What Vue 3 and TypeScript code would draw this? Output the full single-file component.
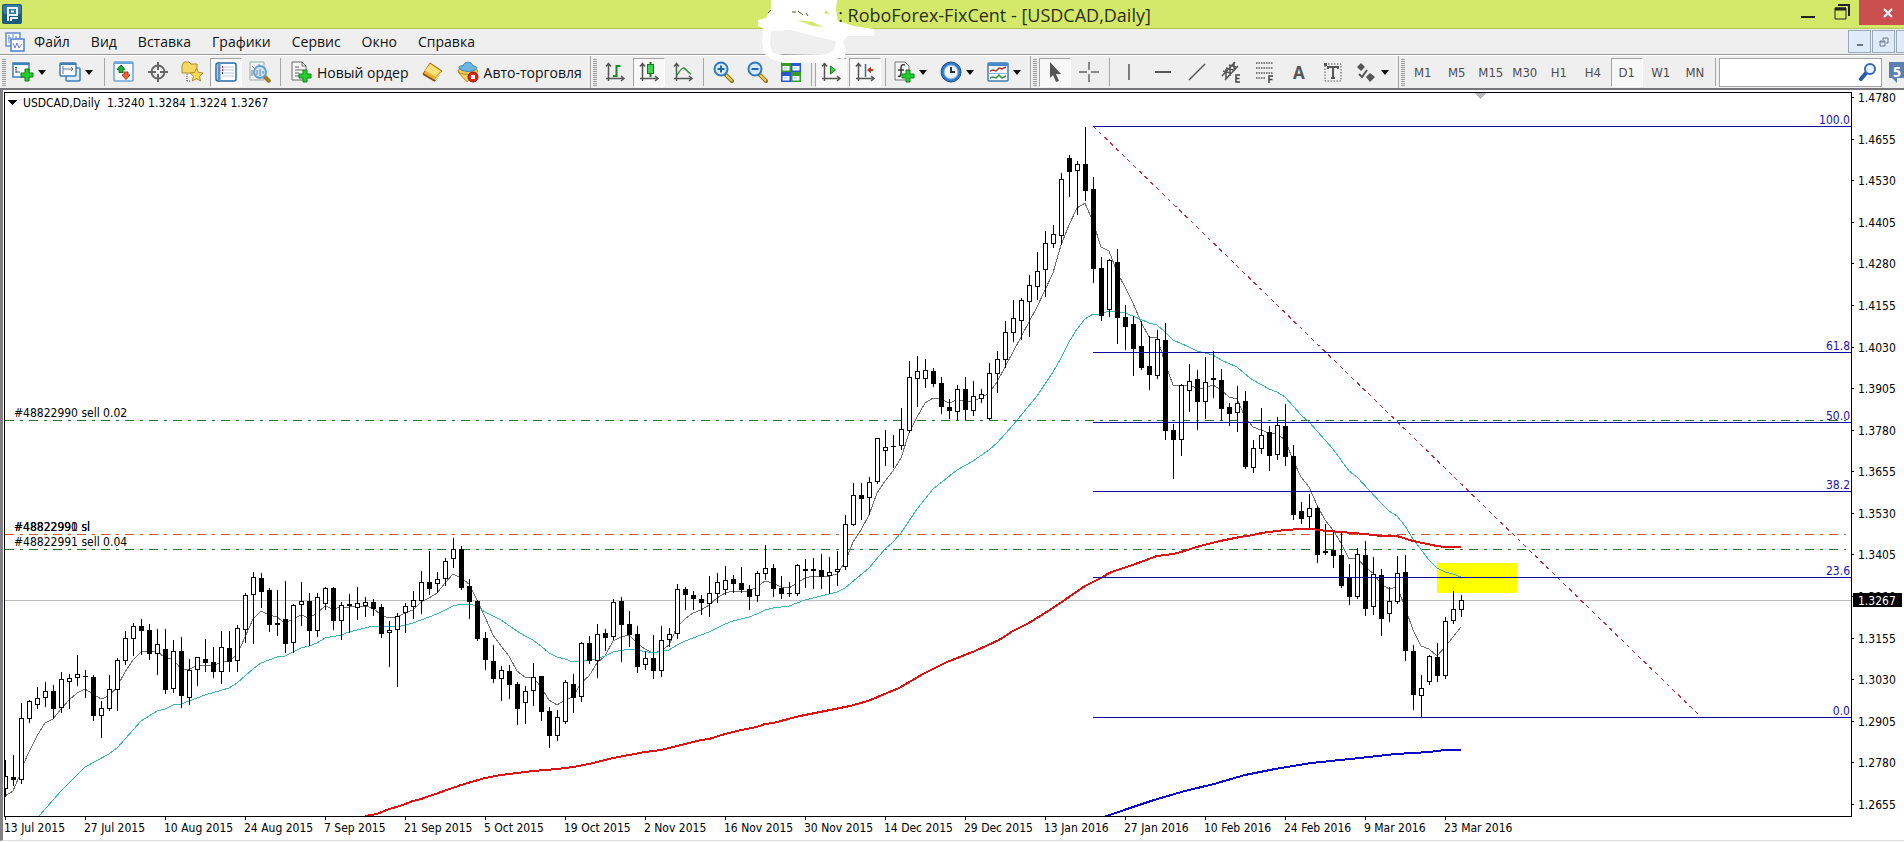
<script setup lang="ts">
interface Candle {
  x: number
  high: number
  top: number
  bottom: number
  low: number
  down: boolean
}

interface Tool {
  kind: 'button' | 'menu' | 'sep' | 'edge'
  icon?: string
  label?: string
  text?: string
  on?: boolean
}

const STEP = 8
const FIRST_X = 5

// high, body top, body bottom, low; a trailing "b" marks a falling candle
const rows = `760 776 789 796|755 777 780 785b|703 718 780 783|700 701 719 722|687 698 705 708|682 691 698 706|685 691 709 718b|672 679 708 712|674 678 682 708|655 674 678 685
670 676 677 697b|675 677 716 720b|701 708 716 737|675 689 709 710|658 660 690 710|631 638 661 664|623 626 639 655|619 626 631 654b|624 630 654 659b|629 644 654 674
629 649 690 693b|640 651 689 692|637 651 696 707b|659 670 698 704|657 657 670 685|639 659 663 671b|647 662 672 677b|631 647 672 683|631 648 662 671b|625 628 661 671
593 595 630 642|572 577 595 643|573 578 592 607b|588 590 625 631b|590 623 625 635b|581 619 644 652b|604 605 643 652|582 601 605 625|593 601 631 645b|593 597 631 636
587 588 604 609|587 588 621 629b|602 605 621 639|594 604 606 632b|587 603 608 619|597 602 606 616|599 602 609 615b|604 607 634 637b|621 630 633 666|613 616 630 686
603 606 613 632|591 600 607 618|571 582 601 613|551 582 589 594b|572 579 584 592|558 561 579 585|538 549 559 567|546 549 588 589b|579 586 602 618b|600 601 639 640b
632 638 660 669b|645 661 679 682b|666 670 679 700|665 671 685 698b|682 684 709 724b|686 691 703 723|663 677 691 705|676 676 712 720b|707 711 736 747b|710 717 736 740
680 682 722 723|674 684 698 712b|642 643 697 701|636 643 661 663b|624 634 661 677|629 633 638 650b|599 602 637 639|597 601 625 661b|611 624 635 646b|626 634 667 672b
651 658 665 669|635 658 671 678b|626 640 671 676|628 634 640 646|584 589 634 638|587 589 595 609b|591 595 599 609b|595 599 603 614b|576 593 604 616|573 582 594 602
566 580 590 594|575 579 584 592b|567 583 590 592b|585 589 597 609b|571 573 596 601|545 568 574 579|564 568 589 596b|576 588 594 598b|582 593 594 596b|564 565 594 595
559 569 571 587b|558 569 571 588b|554 570 577 588b|557 572 576 593|551 569 572 585|515 524 567 569|483 495 525 525|483 495 499 519b|477 482 498 514|438 438 482 483
430 447 451 465|435 446 447 467b|408 429 446 449|361 377 431 432|356 371 379 406|359 370 379 387|368 371 384 386b|377 383 407 413b|399 407 411 418b|385 389 412 419
377 389 410 419b|381 396 411 415|389 394 399 402|363 373 419 419|351 359 374 392|321 332 360 367|300 318 333 341|298 300 321 339|275 285 302 336|252 271 287 299
231 243 270 296|225 234 244 247|173 179 236 244|155 158 172 196b|161 164 171 214|127 164 191 200b|177 189 269 282b|257 268 316 320b|259 260 310 316|249 262 318 343b
305 317 327 349b|316 324 349 375b|321 346 368 369b|336 366 375 389b|330 339 376 378|323 340 431 439b|424 430 440 478b|384 385 440 455|364 381 391 411|370 379 402 429b
357 382 402 418|351 378 380 397b|369 380 409 420b|403 407 414 425b|386 403 413 431|391 401 467 468b|440 448 468 472|408 435 449 453|426 432 456 470b|417 425 455 459
404 426 457 465b|445 456 515 519b|502 511 519 523b|494 508 517 529|506 508 555 562b|524 551 553 554b|530 550 556 567b|532 555 586 587b|564 578 597 604b|548 554 597 598
541 555 609 615b|557 574 607 614|569 575 619 635b|587 601 614 621|556 573 602 603|555 572 651 660b|645 651 695 709b|675 688 696 716|655 656 682 684|643 657 676 681b
617 621 676 678|591 609 621 623|595 600 610 616`

const candles: Candle[] = rows
  .split(/[|\n]/)
  .map((row, i) => {
    const [high, top, bottom, low] = row.replace('b', '').split(' ').map(Number)
    return { x: FIRST_X + i * STEP, high, top, bottom, low, down: row.endsWith('b') }
  })

const fastMa =
  '5,796 13,791 21,772 24,763 29,752 37,736 45,723 53,719 61,709 69,700 77,693 85,689 93,694 101,699 109,696 117,687 125,672 133,660 141,652 157,651 165,658 173,659 181,669 189,669 197,666 205,665 213,666 221,662 229,661 237,655 245,637 253,619 261,611 269,615 277,617 285,623 293,619 301,615 309,618 317,613 325,606 333,609 341,607 349,607 365,606 373,608 381,615 389,618 397,617 405,613 413,610 421,602 429,598 437,593 445,583 453,574 461,578 469,584 477,600 485,617 493,635 501,646 509,656 517,671 525,677 533,677 541,687 549,700 557,705 565,700 573,697 581,683 589,676 597,663 605,656 613,641 621,637 629,635 637,643 645,649 653,653 661,651 669,645 677,627 685,619 693,613 701,610 709,605 717,598 725,593 733,591 749,591 757,587 765,581 773,583 781,587 789,588 797,583 805,578 813,576 829,576 837,574 845,562 853,542 861,530 869,515 877,493 885,481 893,471 901,458 909,433 917,417 925,403 933,398 941,399 949,403 957,400 965,401 973,401 981,398 989,393 997,382 1005,367 1013,352 1021,337 1029,322 1037,307 1045,290 1053,273 1061,245 1069,225 1077,208 1085,203 1093,222 1101,247 1109,251 1117,272 1125,287 1133,303 1141,322 1149,337 1157,337 1165,363 1173,385 1189,385 1197,388 1205,388 1213,385 1221,390 1229,397 1237,399 1245,417 1253,427 1261,430 1269,433 1277,434 1285,440 1293,460 1301,477 1309,487 1317,505 1325,520 1333,530 1341,543 1349,559 1357,558 1365,567 1373,573 1381,584 1389,589 1397,587 1405,607 1413,630 1421,646 1429,649 1437,656 1445,647 1453,637 1461,627'

const midMa =
  '39,816 61,791 85,767 109,754 117,748 125,739 133,730 141,721 157,711 165,709 173,705 181,704 189,701 205,695 229,688 237,683 253,669 261,663 277,657 285,656 301,648 309,646 317,643 325,638 341,635 349,632 373,626 397,627 405,625 413,623 437,614 453,606 461,604 469,604 477,606 485,612 501,620 517,631 525,636 533,640 541,646 549,653 557,657 565,659 573,662 581,661 597,659 605,656 613,652 629,649 637,650 653,653 669,650 677,645 685,641 709,632 725,624 733,621 749,617 757,614 765,610 773,608 789,606 805,600 813,598 837,592 845,588 869,568 885,549 893,542 901,533 917,509 933,489 957,470 973,461 989,450 997,443 1013,425 1037,396 1045,384 1053,372 1061,358 1069,342 1077,329 1085,319 1093,314 1101,314 1109,311 1117,312 1125,313 1133,316 1149,323 1157,325 1165,332 1173,340 1189,347 1197,351 1213,355 1221,360 1237,367 1245,374 1253,380 1269,389 1277,392 1285,397 1301,415 1309,422 1333,449 1349,471 1357,477 1381,503 1389,511 1397,516 1405,526 1413,539 1429,560 1437,568 1445,572 1453,574 1461,577'

const slowMa =
  '365,816 377,814 389,809 400,806 413,801 421,799 461,785 485,778 501,775 533,771 557,769 573,767 589,764 613,758 645,752 661,750 701,740 709,739 725,734 741,730 757,727 765,724 773,723 800,716 825,711 850,706 868,701 899,688 923,674 947,662 975,651 999,640 1013,631 1029,623 1053,608 1085,586 1103,577 1109,573 1141,562 1157,556 1173,554 1181,552 1200,546 1220,541 1240,537 1253,535 1261,533 1285,530 1301,529 1313,529 1317,530 1341,532 1365,534 1381,536 1397,536 1413,541 1437,546 1445,547 1461,547'

const longMa = '1104,817 1130,808 1154,800 1185,791 1214,784 1245,775 1275,769 1311,763 1360,758 1396,754 1413,753 1429,752 1445,750 1461,750'

const fibs = [
  { y: 126, text: '100.0' },
  { y: 352, text: '61.8' },
  { y: 422, text: '50.0' },
  { y: 491, text: '38.2' },
  { y: 577, text: '23.6' },
  { y: 717, text: '0.0' }
]

const orders = [
  { y: 420, cls: 'sell', texts: ['#48822990 sell 0.02'] },
  { y: 534, cls: 'stop', texts: ['#48822990 sl', '#48822991 sl'] },
  { y: 549, cls: 'sell', texts: ['#48822991 sell 0.04'] }
]

const prices = Array.from({ length: 18 }, (_, i) => ({
  y: Math.round(97 + (i * 707) / 17),
  text: (1.478 - i * 0.0125).toFixed(4)
}))

const dates = [
  '13 Jul 2015', '27 Jul 2015', '10 Aug 2015', '24 Aug 2015', '7 Sep 2015', '21 Sep 2015', '5 Oct 2015',
  '19 Oct 2015', '2 Nov 2015', '16 Nov 2015', '30 Nov 2015', '14 Dec 2015', '29 Dec 2015', '13 Jan 2016',
  '27 Jan 2016', '10 Feb 2016', '24 Feb 2016', '9 Mar 2016', '23 Mar 2016'
].map((text, i) => ({ text, x: i * 80 }))

const menus = ['Файл', 'Вид', 'Вставка', 'Графики', 'Сервис', 'Окно', 'Справка']
const frames = ['M1', 'M5', 'M15', 'M30', 'H1', 'H4', 'D1', 'W1', 'MN']

const plus = (x: number, y: number) =>
  `<path d="M${x + 4} ${y}h4v4h4v4h-4v4h-4v-4h-4v-4h4z" fill="#22cf2c" stroke="#0a8412"/>`
const axes = '<path d="M4.500 20V3M2 5.500l2.500-3 2.500 3M2 17.500h17M17 15l3 2.500-3 2.500" fill="none" stroke="#555" stroke-width="1.500"/>'
const lens = (mark: string) =>
  `<path d="M13 13l7 7" stroke="#8f6d1a" stroke-width="4" stroke-linecap="round"/><path d="M14 14l6 6" stroke="#efcf4f" stroke-width="2"/><circle cx="9" cy="8" r="6.500" fill="#d5ecfb" stroke="#2f78c0" stroke-width="2"/><path d="${mark}" stroke="#2467ad" stroke-width="2"/>`

const icons: Record<string, string> = {
  newChart: `<rect x="1" y="2" width="16" height="14" fill="#fff" stroke="#3f7fb5" stroke-width="1.500"/><path d="M1 3h16" stroke="#3f7fb5" stroke-width="2"/><path d="M4 6v6M3 7l1-1 1 1M4 11h4" stroke="#456" fill="none"/>${plus(9, 8)}`,
  profiles: '<rect x="7" y="7" width="14" height="13" rx="1" fill="#dcebf8" stroke="#3f7fb5" stroke-width="1.500"/><rect x="1" y="2" width="16" height="13" rx="1" fill="#fff" stroke="#3f7fb5" stroke-width="1.500"/><path d="M1 3h16" stroke="#3f7fb5" stroke-width="2"/><path d="M4 5v8M4 8h10M12 6l2 2-2 2" fill="none" stroke="#678"/>',
  market: '<rect x="1" y="1" width="19" height="19" rx="1" fill="#f8fcff" stroke="#69a5d8" stroke-width="1.500"/><path d="M1 2h19" stroke="#69a5d8" stroke-width="2"/><path d="M8 4l4 4.500h-2v3h-4v-3h-2z" fill="#2ca638" stroke="#137521"/><path d="M13 18.500l4-4.500h-2v-3h-4v3h-2z" fill="#f0633a" stroke="#b53716"/>',
  target: '<circle cx="11" cy="11" r="6.500" fill="none" stroke="#666" stroke-width="2"/><path d="M11 1v8M11 13v8M1 11h8M13 11h8" stroke="#666" stroke-width="2"/>',
  navigator: '<path d="M1 4l2-3h5l2 2h6v9H1z" fill="#f5d968" stroke="#b08c24"/><path d="M6 13v7M6 20h4" stroke="#444" stroke-dasharray="1 1"/><path d="M15.500 7l2 4.500 4.500.500-3.500 3.200 1 4.800-4-2.500-4.200 2.500 1.200-4.800-3.500-3.200 4.500-.500z" fill="#fadb57" stroke="#b08c24"/>',
  terminal: '<rect x="1" y="2" width="20" height="18" rx="2" fill="#fff" stroke="#2469ab" stroke-width="1.500"/><path d="M4 3v16" stroke="#5b93c8" stroke-width="3"/><path d="M8 6h11M8 9h11M8 12h11M8 15h11" stroke="#b7cbe3"/><path d="M7 6h1M7 9h1" stroke="#c33" stroke-width="2"/><path d="M7 12h1" stroke="#333" stroke-width="2"/>',
  tester: '<path d="M1 1h14v18H1z" fill="#f2f2f2" stroke="#9aa"/><path d="M3 5l4 4M3 15v-6M10 3v5" stroke="#777"/><path d="M15 15l6 6" stroke="#a07a20" stroke-width="4"/><circle cx="11" cy="11" r="6" fill="#cfe6f7" stroke="#659fcb" stroke-width="2"/><path d="M8 14v-5M11 15V8M14 13v-3" stroke="#5b84b0"/>',
  order: `<path d="M2 1h10l4 4v14H2z" fill="#f6f6f6" stroke="#666"/><path d="M12 1v4h4M5 6h4M5 9h8M5 12h4M5 15h4" fill="none" stroke="#666"/>${plus(9, 9)}`,
  book: '<path d="M8 2l12 8-7 10L1 13z" fill="#e9b22c" stroke="#946410"/><path d="M8 3l10.500 7-5 5.500L3 9.500z" fill="#ffdf77"/><path d="M2 13.500l11 6 7-9" fill="none" stroke="#fff3c4"/><path d="M1 13l12 7" stroke="#7b510b" stroke-width="2"/>',
  robot: '<path d="M1 11l9 10 9-10z" fill="#f8d257" stroke="#b88c22"/><ellipse cx="11" cy="10" rx="10" ry="3.500" fill="#ecc853" stroke="#b08a25"/><path d="M3 8c-3-2 1-4 3-3 1-5 9-5 10 0 4 0 5 2 2 4-5 2-11 2-15-1z" fill="#6eb6e2" stroke="#3985ba"/><circle cx="16" cy="16" r="5" fill="#d7261b" stroke="#a3120b"/><rect x="14" y="14" width="4" height="4" fill="#fff"/>',
  bars: `${axes}<path d="M12.500 4v12M12.500 5h4M9 15h3.500" stroke="#178c25" stroke-width="2" fill="none"/>`,
  candles: `${axes}<path d="M12.500 1v15" stroke="#0d7e1b" stroke-width="2"/><rect x="9.500" y="3.500" width="6" height="9" fill="#3dd64b" stroke="#0d7e1b"/>`,
  line: `${axes}<path d="M5 14c3-4 5-8 7-7s3 4 7 6" stroke="#3a8a41" stroke-width="1.500" fill="none"/>`,
  zoomIn: lens('M5.500 8h7M9 4.500v7'),
  zoomOut: lens('M5.500 8h7'),
  tile: '<path d="M1 1h10v10H1z" fill="#3a9a26"/><path d="M11 1h10v10H11z" fill="#2a57cf"/><path d="M1 11h10v10H1z" fill="#2a57cf"/><path d="M11 11h10v10H11z" fill="#3a9a26"/><path d="M2.500 5h7v4.500h-7zM12.500 5h7v4.500h-7zM2.500 15h7v4.500h-7zM12.500 15h7v4.500h-7z" fill="#f3f8ff"/><path d="M4 7h3M14 7h3M4 17h3M14 17h3" stroke="#9cbfe2"/>',
  scroll: `${axes}<path d="M10.500 5v8l5-4z" fill="#45c952" stroke="#14801f"/>`,
  shift: `${axes}<path d="M11.500 3v13" stroke="#2c6ea8" stroke-width="1.500"/><path d="M19 9h-3" stroke="#b5401f" stroke-width="2"/><path d="M17 5.500l-4 3.500 4 3.500z" fill="#b5401f"/>`,
  indicator: `<path d="M2 1h10l4 4v14H2z" fill="#f6f6f6" stroke="#777"/><path d="M12 4c-3-1-4 0-4 3v5c0 3-1 4-3 3M5 9h6" fill="none" stroke="#333" stroke-width="1.500"/>${plus(9, 9)}`,
  clock: '<circle cx="11" cy="11" r="10" fill="#2f79c9" stroke="#1a4f92"/><circle cx="11" cy="11" r="7" fill="#eff7ff" stroke="#7fb2e4"/><path d="M11 6v5h4" fill="none" stroke="#333" stroke-width="2"/>',
  template: '<rect x="1" y="2" width="20" height="18" rx="1" fill="#fff" stroke="#3f7fb5" stroke-width="1.500"/><path d="M1 3.500h20" stroke="#4689c4" stroke-width="3"/><path d="M3 10l3-1 3 1 3-3 3 1 4-2" fill="none" stroke="#a13527" stroke-width="1.500"/><path d="M2 12.500h18" stroke="#8db6d9"/><path d="M3 17l3-1 3 1 3-3 3 3 4-2" fill="none" stroke="#2f8f3b" stroke-width="1.500"/>',
  cursor: '<path d="M6 1l11 12h-5l3 7-3 1-3-7-3 3z" fill="#555"/>',
  cross: '<path d="M11 1v8M11 13v8M1 11h8M13 11h8" stroke="#666" stroke-width="1.500"/>',
  vline: '<path d="M11 3v16" stroke="#555" stroke-width="1.500"/>',
  hline: '<path d="M3 11h16" stroke="#555" stroke-width="2"/>',
  trend: '<path d="M3 19L19 3" stroke="#555" stroke-width="1.500"/>',
  channel: '<path d="M2 15L15 1M5 19L18 5M3 10l7 2M6 7l7 2M9 4l7 2M6 18V8M10 15V4M14 10V1" stroke="#555" stroke-width="1.500"/><path d="M20 14h-4v7h4M16 17.500h3.500" fill="none" stroke="#444" stroke-width="1.500"/>',
  fibo: '<path d="M2 2h17M2 7h17M2 12h17M2 17h10" stroke="#555" stroke-width="1.500" stroke-dasharray="1.500 1"/><path d="M19 15h-4v7M15 18.500h3.500" fill="none" stroke="#444" stroke-width="1.500"/>',
  label: '<rect x="3" y="3" width="16" height="17" fill="none" stroke="#555" stroke-dasharray="1.500 1.500"/><path d="M6 8V6h10v2M11 6v11M9 17h4" fill="none" stroke="#555" stroke-width="2"/><path d="M2 2h3v3H2z" fill="#555"/>',
  arrows: '<path d="M6 2l4 4-4 4-4-4zM15 12l5 4-5 5-4-5z" fill="#555"/><path d="M4 13l3 3 5-7" fill="none" stroke="#555" stroke-width="2"/>'
}

const b = (icon: string, label: string, on = false): Tool => ({ kind: 'button', icon, label, on })
const m = (icon: string, label: string): Tool => ({ kind: 'menu', icon, label })
const sep: Tool = { kind: 'sep' }
const edge: Tool = { kind: 'edge' }

const tools: Tool[] = [
  m('newChart', 'Новый график'), m('profiles', 'Профили'), sep,
  b('market', 'Обзор рынка'), b('target', 'Окно данных'), b('navigator', 'Навигатор'),
  b('terminal', 'Терминал', true), b('tester', 'Тестер стратегий'), sep,
  { kind: 'button', icon: 'order', text: 'Новый ордер' }, b('book', 'MetaEditor'),
  { kind: 'button', icon: 'robot', text: 'Авто-торговля' }, edge,
  b('bars', 'Бары'), b('candles', 'Японские свечи', true), b('line', 'Линия'), sep,
  b('zoomIn', 'Приблизить'), b('zoomOut', 'Отдалить'), b('tile', 'Окна мозаикой'), sep,
  b('scroll', 'Автопрокрутка', true), b('shift', 'Сдвиг графика', true), sep,
  m('indicator', 'Индикаторы'), m('clock', 'Периоды'), m('template', 'Шаблоны'), edge,
  b('cursor', 'Курсор', true), b('cross', 'Перекрестие'), sep,
  b('vline', 'Вертикальная линия'), b('hline', 'Горизонтальная линия'), b('trend', 'Трендовая линия'),
  b('channel', 'Канал'), b('fibo', 'Линии Фибоначчи'), { kind: 'button', text: 'A', label: 'Текст' },
  b('label', 'Метка'), m('arrows', 'Стрелки'), edge
]
</script>

<template>
  <div class="app">
    <header class="titlebar">
      <svg class="logo" viewBox="0 0 20 20" aria-hidden="true">
        <rect x="0" y="0" width="20" height="20" rx="2" fill="#1c5a80" />
        <rect x="1" y="1" width="18" height="9" rx="2" fill="#38799f" />
        <path d="M6 17V4h9v7H6M9 17v-3h7M9 7.500h3" fill="none" stroke="#e8f4fa" stroke-width="2" />
      </svg>
      <h1 class="title">
        <svg class="scribble" viewBox="757 0 118 64" aria-hidden="true">
          <path fill="#fff" fill-rule="evenodd" d="M770 0H836L835 10L837 21L853 26L873 29V36H846L842 42L845 50L843 59L838 58L822 63H782L770 59L763 53L761 40L762 28L757 26V20L765 18L770 8ZM770 31L769 45L772 53L782 55L826 54L833 50L835 41L816 37L790 30Z" />
          <path fill="#d4e869" d="M796 20L812 22L822 27L812 26ZM825 10L829 15L823 13Z" />
          <path d="M791 12l4 0M797 11l5 4M805 13l2 3M767 13l3-3" stroke="#555b30" fill="none" />
        </svg>
        <span class="caption">: RoboForex-FixCent - [USDCAD,Daily]</span>
      </h1>
      <div class="controls">
        <button class="ctl" aria-label="Свернуть"><svg width="16" height="20"><path d="M1 17h14" stroke="#222" stroke-width="2" /></svg></button>
        <button class="ctl" aria-label="Восстановить">
          <svg width="16" height="20"><path d="M4 5h11v11" fill="none" stroke="#222" stroke-width="2" /><path d="M1 8h11v11H1z" fill="none" stroke="#222" /><path d="M1 9h11" stroke="#222" stroke-width="3" /></svg>
        </button>
        <button class="close" aria-label="Закрыть"><svg width="12" height="12"><path d="M2 2l8 8M10 2l-8 8" stroke="#fff" stroke-width="2" /></svg></button>
      </div>
    </header>

    <nav class="menubar">
      <svg class="doc" viewBox="0 0 20 20" aria-hidden="true">
        <rect x="1" y="1" width="14" height="13" fill="#fff" stroke="#5d8ed0" stroke-width="1.500" />
        <path d="M4 3v8M8 2v4M11 4v4M3 6h3" stroke="#5d8ed0" />
        <rect x="6" y="7" width="13" height="12" fill="#fff" stroke="#4b7fc9" stroke-width="1.500" />
        <path d="M8 11l2 5 2-5 2 5 3-4" fill="none" stroke="#6a7bd0" />
      </svg>
      <button v-for="name in menus" :key="name" class="menu">{{ name }}</button>
      <div class="mdi">
        <button class="mdi-btn" aria-label="Свернуть окно"><svg width="12" height="12"><path d="M3 9h6" stroke="#68788c" stroke-width="2" /></svg></button>
        <button class="mdi-btn" aria-label="Восстановить окно"><svg width="12" height="12"><path d="M5 4V2h5v5H8M2 5h5v5H2zM2 6h5" fill="none" stroke="#68788c" /></svg></button>
        <button class="mdi-btn" aria-label="Закрыть окно"><svg width="12" height="12"><path d="M3 3l6 6M9 3l-6 6" stroke="#68788c" stroke-width="2" /></svg></button>
      </div>
    </nav>

    <div class="toolbar">
      <span class="grip"></span>
      <template v-for="(t, i) in tools" :key="i">
        <span v-if="t.kind === 'sep'" class="sep"></span>
        <span v-else-if="t.kind === 'edge'" class="edge"><span class="grip"></span></span>
        <button v-else class="tool" :class="{ on: t.on, caret: t.kind === 'menu', wide: t.icon && t.text, letter: !t.icon }" :aria-label="t.label">
          <svg v-if="t.icon" class="icon" viewBox="0 0 22 22" aria-hidden="true" v-html="icons[t.icon]"></svg>
          <span v-if="t.text">{{ t.text }}</span>
          <span v-if="t.kind === 'menu'" class="arrow"></span>
        </button>
      </template>
      <button v-for="f in frames" :key="f" class="tool frame" :class="{ on: f === 'D1' }">{{ f }}</button>
      <span class="sep"></span>
      <label class="search">
        <input type="text" aria-label="Поиск" />
        <svg width="18" height="20" viewBox="0 0 18 20" aria-hidden="true">
          <path d="M7 11l-5 6" stroke="#2c59a8" stroke-width="4" stroke-linecap="round" />
          <circle cx="11" cy="7" r="5" fill="#eaf3ff" stroke="#3767b5" stroke-width="2" />
        </svg>
      </label>
      <button class="chat" aria-label="Сообщения">
        <svg width="28" height="24" viewBox="0 0 28 24"><path d="M2 2h24v16H10v5l-5-5H2z" fill="#5d7fb0" /></svg>
        <span class="count">5</span>
      </button>
    </div>

    <main class="chart">
      <section class="plot">
        <svg class="canvas" role="img" aria-label="USDCAD, Daily">
          <g transform="translate(-5 -93)">
            <rect class="zone" x="1437" y="563" width="80" height="30" />
            <rect class="bid" x="5" y="600" width="100%" height="1" />
            <line v-for="o in orders" :key="o.y" :class="o.cls" x1="5" x2="100%" :y1="o.y + 0.5" :y2="o.y + 0.5" />
            <polyline class="ma fast" :points="fastMa" />
            <polyline class="ma mid" :points="midMa" />
            <g v-for="c in candles" :key="c.x">
              <rect :x="c.x" :y="c.high" width="1" :height="c.low - c.high + 1" />
              <rect :x="c.x - 2" :y="c.top" width="5" :height="c.bottom - c.top" />
              <rect v-if="!c.down" class="hollow" :x="c.x - 1" :y="c.top + 1" width="3" :height="Math.max(1, c.bottom - c.top - 2)" />
            </g>
            <polyline class="ma slow" :points="slowMa" />
            <polyline class="ma long" :points="longMa" />
            <line class="ray" x1="1093" y1="126" x2="1701" y2="717" />
            <rect v-for="f in fibs" :key="f.text" class="fib" x="1093" :y="f.y" width="100%" height="1" />
            <path class="shift-mark" d="M1474 93h13l-6.500 6z" />
            <path d="M8 100h9l-4.500 5z" />
            <text x="23" y="107">USDCAD,Daily&#160; 1.3240 1.3284 1.3224 1.3267</text>
            <template v-for="o in orders" :key="o.y">
              <text v-for="t in o.texts" :key="t" x="14" :y="o.y - 3">{{ t }}</text>
            </template>
          </g>
          <g transform="translate(-1 -93)">
            <text v-for="f in fibs" :key="f.text" class="fib-text" x="100%" :y="f.y - 2">{{ f.text }}</text>
          </g>
        </svg>
      </section>
      <svg class="price-axis" role="img" aria-label="Цена">
        <g transform="translate(0 -92)">
          <g v-for="p in prices" :key="p.text">
            <rect x="0" :y="p.y" width="2" height="1" />
            <text x="6" :y="p.y + 5">{{ p.text }}</text>
          </g>
          <rect x="1" y="593" width="49" height="14" />
          <text x="6" y="605" class="now">1.3267</text>
        </g>
      </svg>
      <svg class="date-axis" role="img" aria-label="Дата">
        <g v-for="d in dates" :key="d.x">
          <rect :x="d.x + 1" y="0" width="1" height="3" />
          <text :x="d.x" y="15">{{ d.text }}</text>
        </g>
      </svg>
    </main>
  </div>
</template>

<style>
body {
  margin: 0;
  background: #fff;
}
</style>

<style scoped>
.app {
  overflow: hidden;
  background: #fff;
  color: #111;
  font-family: "Open Sans", "Noto Sans", sans-serif;
  font-size: 14px;
}
button {
  margin: 0;
  padding: 0;
  border: 0;
  background: none;
  color: inherit;
  font: inherit;
}
.titlebar {
  display: flex;
  align-items: flex-start;
  height: 28px;
  border-bottom: 1px solid #b4c55c;
  background: #d4e869;
}
.logo {
  flex: none;
  width: 20px;
  height: 20px;
  margin: 4px 0 0 2px;
}
.title {
  display: flex;
  flex: 1;
  justify-content: center;
  margin: 0;
  padding-left: 96px;
  font-size: 18px;
  font-weight: 400;
  line-height: 30px;
  color: #2c3018;
  white-space: nowrap;
}
.scribble {
  position: relative;
  z-index: 2;
  flex: none;
  width: 118px;
  height: 64px;
  margin-right: -38px;
}
.caption {
  position: relative;
  z-index: 1;
}
.controls {
  display: flex;
  flex: none;
  margin-right: -12px;
}
.ctl {
  width: 34px;
  height: 20px;
}
.ctl svg,
.close svg,
.mdi-btn svg {
  display: block;
  margin: 0 auto;
}
.close {
  width: 57px;
  height: 25px;
  background: #c9504f;
}
.menubar {
  display: flex;
  align-items: center;
  height: 25px;
  border-bottom: 1px solid #9c9c9c;
  background: #efefef;
}
.doc {
  flex: none;
  width: 20px;
  height: 20px;
  margin: 0 9px 0 5px;
}
.menu {
  flex: none;
  margin-right: 21px;
  line-height: 24px;
}
.mdi {
  display: flex;
  flex: none;
  gap: 1px;
  margin: 0 -15px 0 auto;
}
.mdi-btn {
  width: 23px;
  height: 23px;
  border: 1px solid #9aa9b9;
  background: #dfebf8;
}
.toolbar {
  display: flex;
  align-items: center;
  gap: 2px;
  height: 32px;
  padding-left: 2px;
  border-top: 1px solid #fff;
  border-bottom: 2px solid #77777b;
  background: #efefef;
}
.grip {
  flex: none;
  width: 4px;
  height: 27px;
  background: repeating-linear-gradient(#999 0 1px, #efefef 1px 2px);
}
.edge {
  display: flex;
  flex: none;
  align-items: center;
  width: 6px;
  height: 32px;
  border-left: 1px solid #a6a6a6;
}
.edge .grip {
  margin-left: 2px;
}
.sep {
  flex: none;
  width: 1px;
  height: 28px;
  margin: 0 1px 0 2px;
  background: #a6a6a6;
}
.tool {
  display: flex;
  flex: none;
  align-items: center;
  justify-content: center;
  width: 32px;
  height: 29px;
  border: 1px solid transparent;
  box-sizing: border-box;
}
.tool.on {
  border-color: #a3a3a3 #fff #fff #a3a3a3;
  background: #f8f8f8;
}
.icon {
  flex: none;
  width: 22px;
  height: 22px;
}
.tool.caret {
  gap: 4px;
  justify-content: flex-start;
  width: 45px;
  padding-left: 3px;
}
.tool.wide {
  gap: 5px;
  width: auto;
  padding: 0 5px;
  white-space: nowrap;
}
.tool.letter {
  color: #555;
  font-size: 17px;
  font-weight: 700;
}
.arrow {
  width: 0;
  height: 0;
  border: 4px solid transparent;
  border-top: 5px solid #111;
  border-bottom: 0;
}
.tool.frame {
  color: #4d4d4d;
  font-family: "DejaVu Sans Condensed", "Noto Sans", sans-serif;
  font-size: 13px;
}
.search {
  display: flex;
  flex: 1;
  align-items: center;
  min-width: 60px;
  height: 27px;
  border: 1px solid #a3a3a3;
  background: #fff;
}
.search input {
  flex: 1;
  min-width: 0;
  border: 0;
  outline: 0;
  background: none;
}
.search svg {
  flex: none;
  margin: 0 4px;
}
.chat {
  display: grid;
  flex: none;
  width: 28px;
  margin: 0 -11px 0 3px;
  place-items: center;
}
.chat > * {
  grid-area: 1 / 1;
}
.count {
  margin-right: 8px;
  color: #fff;
  font-size: 14px;
  font-weight: 700;
  line-height: 20px;
}
.chart {
  display: grid;
  grid-template: auto auto / 1fr 52px;
  padding: 2px 0 0 1px;
  border-bottom: 1px solid #ddd;
  border-left: 3px solid #808085;
  font-family: "DejaVu Sans Condensed", "Noto Sans", sans-serif;
  font-size: 12px;
}
.plot {
  border: 1px solid #000;
}
.canvas {
  display: block;
  width: 100%;
  height: 723px;
}
.canvas,
.price-axis,
.date-axis {
  shape-rendering: crispEdges;
}
.price-axis {
  width: 52px;
  height: 725px;
}
.date-axis {
  grid-column: 1 / -1;
  width: 100%;
  height: 23px;
}
.hollow {
  fill: #fff;
}
.zone {
  fill: #ff0;
}
.bid {
  fill: #bdbdbd;
}
.sell,
.stop {
  stroke: #257525;
  stroke-dasharray: 9 6 3 6;
}
.stop {
  stroke: #cf5a32;
}
.ma {
  fill: none;
}
.fast {
  stroke: #707070;
}
.mid {
  stroke: #36b5ba;
}
.slow {
  stroke: #d81414;
  stroke-width: 2px;
}
.long {
  stroke: #0c0cc4;
  stroke-width: 2px;
}
.ray {
  stroke: #b52a36;
  stroke-dasharray: 4 4;
}
.fib {
  fill: #0b0ba4;
}
.fib-text {
  fill: #1c10b4;
  text-anchor: end;
}
.shift-mark {
  fill: #bbb;
}
.now {
  fill: #fff;
}
</style>
